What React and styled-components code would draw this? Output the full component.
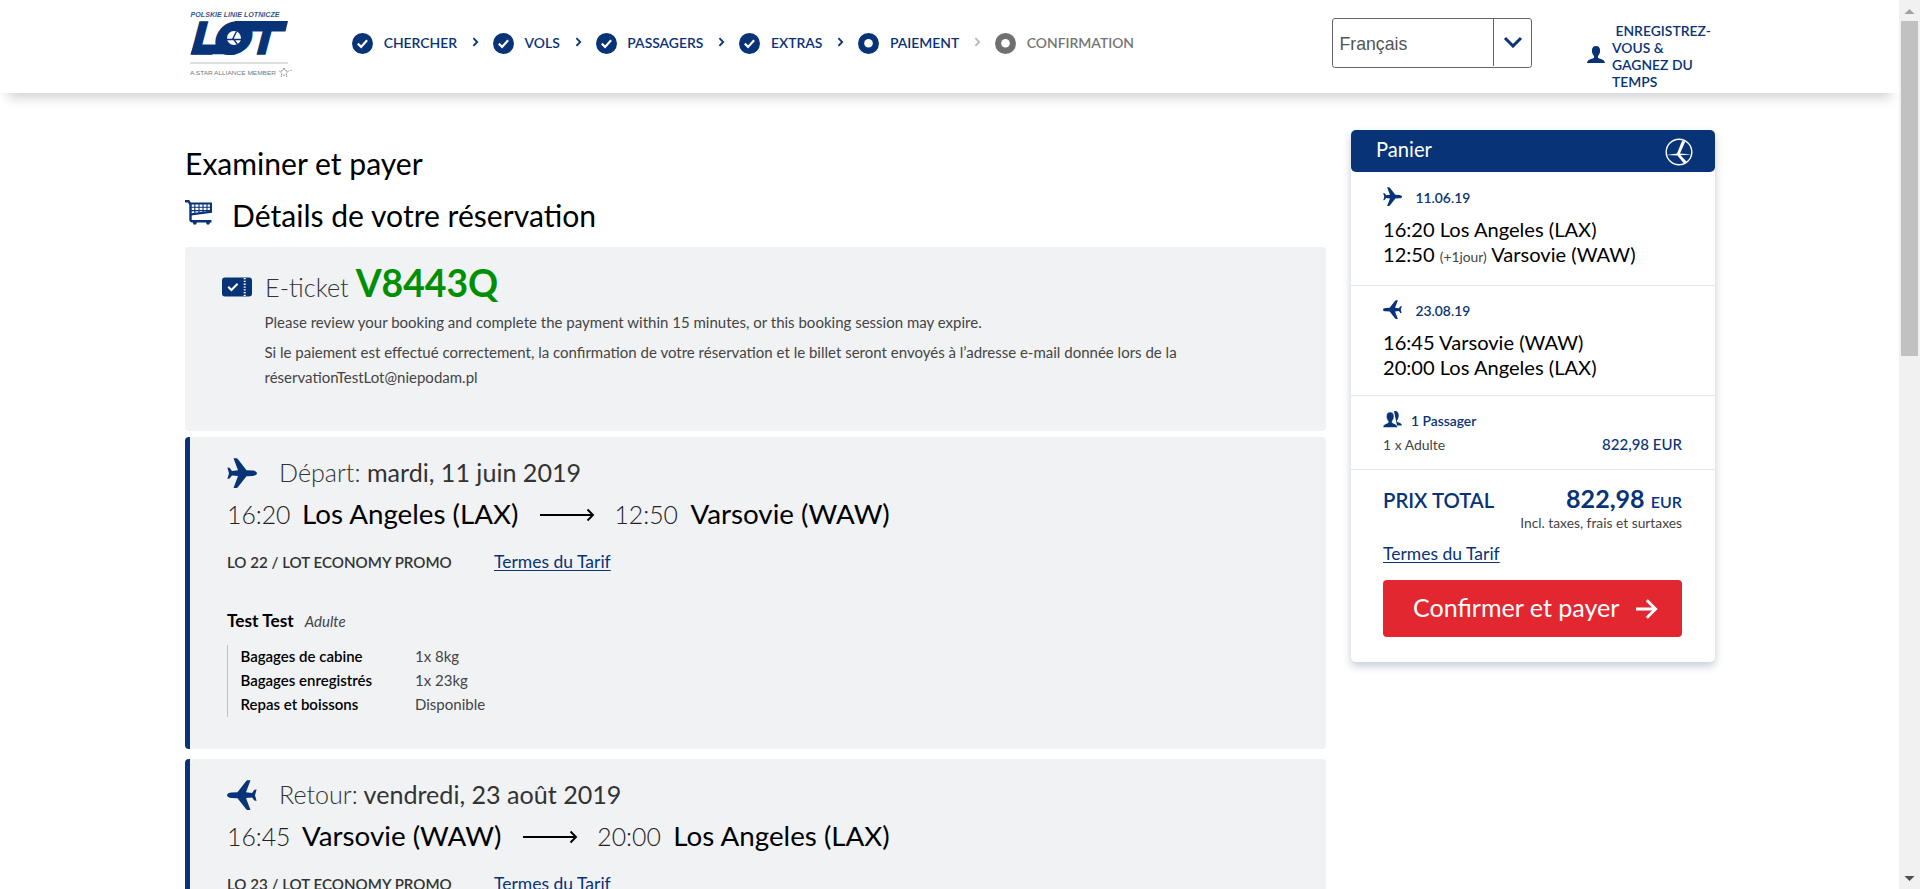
import React from 'react';
import styled, { createGlobalStyle, css } from 'styled-components';

const navy = '#083377';

const GlobalStyle = createGlobalStyle`
  *, *::before, *::after { box-sizing: border-box; }
  html, body { margin: 0; height: 100%; overflow: hidden; background: #fff; }
  body { font-family: Lato, "Liberation Sans", sans-serif; color: #000; }
  h1, h2, h3, p { margin: 0; font-weight: 400; }
  svg { display: block; flex: none; }
`;

const Screen = styled.div`
  display: flex;
  height: 889px;
  width: 1920px;
  overflow: hidden;
`;

const Page = styled.div`
  width: 1899px;
  height: 889px;
  overflow: hidden;
`;

/* ---------- header ---------- */

const Header = styled.header`
  display: flex;
  align-items: flex-start;
  height: 93px;
  padding-left: 190px;
  background: #fff;
  box-shadow: 0 12px 12px -8px rgba(0, 0, 0, 0.2);
`;

const LogoBox = styled.a`
  display: block;
  width: 162px;
  padding-top: 8px;
`;

const Steps = styled.nav`
  display: flex;
  align-items: center;
  height: 86px;
  width: 980px;
`;

const Step = styled.span`
  display: flex;
  align-items: center;
  font-size: 13.9px;
  font-weight: 600;
  line-height: 20px;
  color: ${(p) => (p.$muted ? '#757575' : navy)};
  white-space: nowrap;
  svg { margin-right: 10.7px; }
`;

const StepArrow = styled.span`
  display: flex;
  padding: 0 13.8px 2px 15.1px;
  color: ${(p) => (p.$muted ? '#b3b9c6' : navy)};
`;

const LanguageSelect = styled.div`
  display: flex;
  width: 200px;
  height: 50px;
  margin-top: 18px;
  border: 1px solid #666;
  border-radius: 3px;
  font: 17.7px/50px "Liberation Sans", Arial, sans-serif;
  color: #555;
`;

const LanguageValue = styled.span`
  flex: 1;
  padding-left: 6.5px;
`;

const LanguageToggle = styled.span`
  display: flex;
  align-items: center;
  justify-content: center;
  width: 38px;
  height: 47px;
  padding-bottom: 1px;
  border-left: 1px solid #666;
  color: ${navy};
`;

const Register = styled.a`
  display: flex;
  align-items: center;
  gap: 7px;
  margin: 22px 0 0 55px;
  width: 130px;
  font-size: 13.9px;
  font-weight: 600;
  line-height: 17px;
  color: ${navy};
  svg { margin-top: -4px; }
`;

/* ---------- main column ---------- */

const Content = styled.main`
  display: flex;
  align-items: flex-start;
  gap: 25px;
  padding-left: 185px;
`;

const Column = styled.div`
  width: 1141px;
  padding-top: 50px;
`;

const Title = styled.h1`
  font-size: 30.1px;
  line-height: 40px;
`;

const Subtitle = styled.h2`
  display: flex;
  gap: 20px;
  margin: 12px 0;
  font-size: 30.1px;
  line-height: 40px;
  svg { margin-top: 5px; }
`;

const Card = styled.section`
  background: #f0f2f4;
  border-radius: 4px;
`;

const TicketCard = styled(Card)`
  display: flex;
  gap: 12.500px;
  height: 184px;
  padding: 13px 80px 0 37px;
  svg { margin-top: 17px; }
`;

const TicketTitle = styled.h3`
  height: 45px;
  padding-left: 0.5px;
  font-size: 25.3px;
  font-weight: 300;
  line-height: 46px;
  color: #333;
`;

const BookingCode = styled.strong`
  font-size: 37.3px;
  line-height: 46px;
  font-weight: 700;
  color: #008f00;
`;

const Note = styled.p`
  margin-top: 5px;
  font-size: 15.03px;
  line-height: 25px;
  color: #444;
`;

const FlightCard = styled(Card)`
  height: 312px;
  margin-top: ${(p) => p.$gap}px;
  padding: 20px 0 0 37px;
  border-left: 5px solid ${navy};
`;

const FlightDate = styled.div`
  display: flex;
  gap: 22px;
  height: 30px;
  font-size: 25.1px;
  line-height: 30px;
  color: #333;
  svg { margin-top: 1px; }
`;

const Thin = styled.span`
  font-weight: 300;
  font-size: 25.1px;
`;

const Route = styled.div`
  display: flex;
  align-items: baseline;
  height: 36px;
  margin-top: 9px;
  font-size: 27.75px;
  line-height: 36px;
`;

const RouteTime = styled.span`
  width: ${(p) => p.$w}px;
  font-size: 24.8px;
  font-weight: 300;
  color: #222;
`;

const RouteArrow = styled.span`
  align-self: center;
  padding: 2px 19px 0 22px;
`;

const FareRow = styled.div`
  display: flex;
  align-items: baseline;
  height: 24px;
  margin-top: 18px;
  font-size: 15.1px;
  font-weight: 600;
  line-height: 24px;
  color: #333;
`;

const FareName = styled.span`
  width: 267px;
`;

const FareLink = styled.a`
  font-size: 17.5px;
  font-weight: 400;
  line-height: 24px;
  color: ${navy};
  text-decoration: underline;
  text-decoration-thickness: 1px;
  text-underline-offset: 2px;
`;

const Traveller = styled.div`
  display: flex;
  align-items: baseline;
  gap: 11px;
  height: 24px;
  margin-top: 35px;
  font-size: 17.3px;
  line-height: 24px;
  font-weight: 700;
  em { font-size: 15px; font-weight: 400; color: #444; }
`;

const Services = styled.dl`
  display: grid;
  grid-template-columns: 174.5px 1fr;
  grid-auto-rows: 24px;
  margin: 12px 0 0;
  padding-left: 12.5px;
  border-left: 1px solid #b9c3cf;
  font-size: 15px;
  line-height: 23px;
  dt { font-weight: 600; }
  dd { margin: 0; color: #444; }
`;

/* ---------- basket ---------- */

const Basket = styled.aside`
  width: 364px;
  height: 532px;
  margin-top: 37px;
  border-radius: 5px;
  background: #fff;
  box-shadow: 0 4px 9px rgba(8, 40, 80, 0.24);
`;

const BasketHead = styled.div`
  display: flex;
  align-items: center;
  justify-content: space-between;
  height: 42px;
  padding: 0 22px 0 25px;
  border-radius: 5px;
  background: ${navy};
  color: #fff;
  font-size: 20.2px;
  line-height: 40px;
  span { margin-top: -4px; }
  svg { margin-top: 2px; }
`;

const BasketSection = styled.div`
  padding: ${(p) => p.$pad};
  ${(p) => !p.$last && css`border-bottom: 1px solid #e4e6e9;`}
`;

const BasketLabel = styled.div`
  display: flex;
  gap: ${(p) => p.$gap}px;
  font-size: 13.85px;
  font-weight: 600;
  line-height: ${(p) => p.$lh}px;
  color: ${navy};
`;

const BasketRoute = styled.div`
  margin-top: 9px;
  font-size: 20.1px;
  line-height: 25px;
  small { font-size: 13.8px; line-height: 1; color: #444; }
`;

const BasketRow = styled.div`
  display: flex;
  align-items: baseline;
  justify-content: space-between;
`;

const PassengerRow = styled(BasketRow)`
  height: 20px;
  margin-top: 3px;
  font-size: 13.95px;
  line-height: 20px;
  color: #444;
  b { font-size: 15px; font-weight: 500; color: ${navy}; }
`;

const TotalRow = styled(BasketRow)`
  height: 30px;
  line-height: 30px;
  font-size: 20.3px;
  font-weight: 600;
  color: ${navy};
`;

const TotalPrice = styled.span`
  font-size: 25.1px;
  font-weight: 700;
  small { font-size: 16px; line-height: 1; font-weight: 600; }
`;

const TaxNote = styled.div`
  font-size: 13.8px;
  line-height: 20px;
  text-align: right;
  color: #444;
`;

const BasketTerms = styled.div`
  height: 24px;
  margin-top: 9px;
  line-height: 24px;
`;

const PayButton = styled.button`
  display: flex;
  align-items: center;
  gap: 17px;
  width: 299px;
  height: 57px;
  margin: 14px 0 0;
  padding: 0 0 4px 30px;
  border: 0;
  border-radius: 4px;
  background: #e32731;
  color: #fff;
  font: 25.05px/30px Lato, sans-serif;
  svg { margin-top: 4px; }
`;

/* ---------- scrollbar ---------- */

const ScrollTrack = styled.div`
  display: flex;
  flex-direction: column;
  align-items: center;
  justify-content: space-between;
  width: 21px;
  background: #f1f1f1;
`;

const ScrollThumb = styled.div`
  width: 17px;
  height: 335px;
  margin-bottom: auto;
  background: #c1c1c1;
`;

/* ---------- drawings ---------- */

const Logo = () => (
  <svg width="104" height="72" viewBox="0 0 104 72">
    <g fill={navy}>
      <text x="0.5" y="9" fontFamily="Liberation Sans" fontSize="6.6" fontWeight="700" fontStyle="italic" textLength="89" lengthAdjust="spacingAndGlyphs" fillOpacity=".85">POLSKIE LINIE LOTNICZE</text>
      <text transform="translate(0 45.500) skewX(-7)" fontFamily="Lato" fontSize="44" fontWeight="900" fontStyle="italic" textLength="87" lengthAdjust="spacingAndGlyphs" stroke={navy} strokeWidth="1.5">LOT</text>
      <text x="0" y="67" fontFamily="Liberation Sans" fontSize="6.1" fill="#777" textLength="86" lengthAdjust="spacingAndGlyphs">A STAR ALLIANCE MEMBER</text>
    </g>
    <path d="M45 13H98L95.500 23.500H50ZM4 36.500H40L45 46.300H0.500Z" fill={navy} />
    <ellipse cx="44" cy="30" rx="13" ry="12" fill={navy} />
    <circle cx="44" cy="30" r="7" fill="#fff" />
    <path d="M46.500 23.500L43 30.500L47.500 36.500M37 31.500H51" fill="none" stroke={navy} strokeWidth="1.4" />
    <path d="M0 55H98" stroke="#d4d4d4" strokeWidth="1.4" />
    <path d="M94 60l1.4 2.8 3.1.3-2.3 2.2.7 3.2-2.9-1.6-2.9 1.6.7-3.2-2.3-2.2 3.1-.3Z" fill="none" stroke="#888" strokeDasharray="2 1" />
    <path d="M99.500 62.500H102" stroke="#aaa" strokeWidth=".7" />
  </svg>
);

const StepIcon = ({ done, muted }) => (
  <svg width="21" height="21" viewBox="0 0 21 21">
    <circle cx="10.5" cy="10.5" r="10.5" fill={muted ? '#707070' : navy} />
    {done ? (
      <path d="M5.8 10.6l3.3 3.3 6-6.6" fill="none" stroke="#fff" strokeWidth="2.2" />
    ) : (
      <circle cx="10.5" cy="10.3" r="4.3" fill="#fff" />
    )}
  </svg>
);

const SmallChevron = () => (
  <svg width="7" height="10" viewBox="0 0 7 10">
    <path d="M1.4 1.2L5.2 5 1.4 8.8" fill="none" stroke="currentColor" strokeWidth="1.8" />
  </svg>
);

const DownChevron = () => (
  <svg width="20" height="12" viewBox="0 0 20 12">
    <path d="M2 2l8 8 8-8" fill="none" stroke="currentColor" strokeWidth="3" />
  </svg>
);

const PersonIcon = () => (
  <svg width="18" height="17" viewBox="0 0 18 17">
    <path d="M9 0c2.700 0 4.200 2 4.100 4.700-.1 2.300-.9 4.100-2.100 5.300v1.700c.3.900 6.800 1.200 7 5.300H0c.2-4.100 6.700-4.400 7-5.300V10C5.800 8.800 5 7 4.900 4.700 4.800 2 6.300 0 9 0z" fill={navy} />
  </svg>
);

const PeopleIcon = () => (
  <svg width="19" height="17" viewBox="0 0 19 17">
    <path d="M11 .2c3-.6 4.800 1.300 4.700 4.200 0 2-.7 3.700-1.700 4.900v1.300c.6 1 4.600 1.300 5 3.800h-5z" fill={navy} />
    <path d="M7.200 1c2.500 0 3.900 1.900 3.800 4.500-.1 2-.8 3.500-1.900 4.600v1.300c.3.900 5.300 1.400 5.500 5.100H0c.2-3.700 5-4.200 5.300-5.100v-1.300C4.200 9 3.500 7.500 3.400 5.500 3.300 2.900 4.700 1 7.200 1z" fill={navy} stroke="#fff" strokeWidth=".5" />
  </svg>
);

const Plane = ({ size, back }) => (
  <svg width={size} height={size} viewBox="0 0 30 30">
    <path
      transform={back ? 'translate(30 0) scale(-1 1)' : undefined}
      d="M30 15.200C29.900 13.800 28 12.600 25.500 12.500L19.500 12.200L10.800 1Q10.200.2 9.500.2H6.500L11 12.300L5 12.900L2.600 9.800L.4 9.500L2 15.200L.4 20.900L2.600 20.600L5 17.500L11 18.100L6.500 30H9.500Q10.200 30 10.800 29.300L19.500 18.200L25.500 17.900C28 17.800 29.900 16.600 30 15.200Z"
      fill={navy}
    />
  </svg>
);

const CartIcon = () => (
  <svg width="27" height="25" viewBox="0 0 27 25">
    <g fill="none" stroke={navy}>
      <path d="M0 1.200H3.500L5.500 4.500V19.500Q5.500 21.300 7.500 21.300H26.500" strokeWidth="2.400" />
      <path d="M4.500 3.500H26V11.800L6 14.300" strokeWidth="2.200" />
      <path d="M6 7.200H26M6 10.600H26M9.800 4V13M14 4V13M18 4V12.500M22 4V12.500" strokeWidth="1.100" />
    </g>
    <circle cx="9.800" cy="22.800" r="1.900" fill={navy} />
    <circle cx="23" cy="22.800" r="1.900" fill={navy} />
  </svg>
);

const TicketIcon = () => (
  <svg width="30" height="20" viewBox="0 0 30 20">
    <rect y=".5" width="30" height="19" rx="3" fill={navy} />
    <path d="M6.200 9.800l3.200 3.200 6.200-6.200" fill="none" stroke="#fff" strokeWidth="2" />
    <path d="M22.700 1v18" stroke="#fff" strokeWidth="2" strokeDasharray="1.300 1.500" />
  </svg>
);

const LongArrow = () => (
  <svg width="55" height="14" viewBox="0 0 55 14">
    <path d="M0 7H53M47.500 1.500L53 7L47.500 12.500" fill="none" stroke="#000" strokeWidth="1.900" />
  </svg>
);

const CraneIcon = () => (
  <svg width="28" height="28" viewBox="0 0 28 28">
    <circle cx="14" cy="14" r="12.800" fill="none" stroke="#fff" strokeWidth="1.400" />
    <path d="M1.500 17L12 15.400L17 3L20.300 3.500L15 15.400L26.500 16.600L15.500 17.300L21.500 23.500L19.500 26.300L12.500 17.500Z" fill="#fff" />
  </svg>
);

const RightArrow = () => (
  <svg width="22" height="20" viewBox="0 0 22 20">
    <path d="M0 10H19.500M10.800 1.200L19.600 10L10.800 18.800" fill="none" stroke="#fff" strokeWidth="2.900" />
  </svg>
);

const ScrollArrow = ({ down }) => (
  <svg width="21" height="21" viewBox="0 0 21 21">
    <path d={down ? 'M5.500 8h10l-5 5z' : 'M5.500 14h10l-5-5z'} fill={down ? '#505050' : '#a3a3a3'} />
  </svg>
);

/* ---------- data ---------- */

const steps = [
  { label: 'CHERCHER', done: true },
  { label: 'VOLS', done: true },
  { label: 'PASSAGERS', done: true },
  { label: 'EXTRAS', done: true },
  { label: 'PAIEMENT' },
  { label: 'CONFIRMATION', muted: true },
];

const flights = [
  { kind: 'Départ:', date: 'mardi, 11 juin 2019', from: ['16:20', 'Los Angeles (LAX)'], to: ['12:50', 'Varsovie (WAW)'], fare: 'LO 22 / LOT ECONOMY PROMO', gap: 6 },
  { kind: 'Retour:', date: 'vendredi, 23 août 2019', from: ['16:45', 'Varsovie (WAW)'], to: ['20:00', 'Los Angeles (LAX)'], fare: 'LO 23 / LOT ECONOMY PROMO', gap: 10, back: true },
];

const services = [
  ['Bagages de cabine', '1x 8kg'],
  ['Bagages enregistrés', '1x 23kg'],
  ['Repas et boissons', 'Disponible'],
];

const Flight = ({ f }) => (
  <FlightCard $gap={f.gap}>
    <FlightDate>
      <Plane size={30} back={f.back} />
      <span><Thin>{f.kind}</Thin> {f.date}</span>
    </FlightDate>
    <Route>
      <RouteTime $w={75}>{f.from[0]}</RouteTime>
      <span>{f.from[1]}</span>
      <RouteArrow><LongArrow /></RouteArrow>
      <RouteTime $w={76}>{f.to[0]}</RouteTime>
      <span>{f.to[1]}</span>
    </Route>
    <FareRow>
      <FareName>{f.fare}</FareName>
      <FareLink>Termes du Tarif</FareLink>
    </FareRow>
    <Traveller>Test Test <em>Adulte</em></Traveller>
    <Services>
      {services.map(([k, v]) => (
        <React.Fragment key={k}>
          <dt>{k}</dt>
          <dd>{v}</dd>
        </React.Fragment>
      ))}
    </Services>
  </FlightCard>
);

export default function App() {
  return (
    <Screen>
      <GlobalStyle />
      <Page>
        <Header>
          <LogoBox><Logo /></LogoBox>
          <Steps>
            {steps.map((s, i) => (
              <React.Fragment key={s.label}>
                {i > 0 && <StepArrow $muted={s.muted}><SmallChevron /></StepArrow>}
                <Step $muted={s.muted}><StepIcon done={s.done} muted={s.muted} />{s.label}</Step>
              </React.Fragment>
            ))}
          </Steps>
          <LanguageSelect>
            <LanguageValue>Français</LanguageValue>
            <LanguageToggle><DownChevron /></LanguageToggle>
          </LanguageSelect>
          <Register>
            <PersonIcon />
            <span>&nbsp;ENREGISTREZ-<br />VOUS &amp;<br />GAGNEZ DU<br />TEMPS</span>
          </Register>
        </Header>
        <Content>
          <Column>
            <Title>Examiner et payer</Title>
            <Subtitle><CartIcon />Détails de votre réservation</Subtitle>
            <TicketCard>
              <TicketIcon />
              <div>
                <TicketTitle>E-ticket <BookingCode>V8443Q</BookingCode></TicketTitle>
                <Note>Please review your booking and complete the payment within 15 minutes, or this booking session may expire.</Note>
                <Note>Si le paiement est effectué correctement, la confirmation de votre réservation et le billet seront envoyés à l’adresse e-mail donnée lors de la<br />réservationTestLot@niepodam.pl</Note>
              </div>
            </TicketCard>
            {flights.map((f) => <Flight key={f.kind} f={f} />)}
          </Column>
          <Basket>
            <BasketHead><span>Panier</span><CraneIcon /></BasketHead>
            <BasketSection $pad="15px 32px 18px">
              <BasketLabel $gap={13.5} $lh={21}><Plane size={19} />11.06.19</BasketLabel>
              <BasketRoute>16:20 Los Angeles (LAX)<br />12:50 <small>(+1jour)</small> Varsovie (WAW)</BasketRoute>
            </BasketSection>
            <BasketSection $pad="14px 32px 15px">
              <BasketLabel $gap={13.5} $lh={21}><Plane size={19} back />23.08.19</BasketLabel>
              <BasketRoute>16:45 Varsovie (WAW)<br />20:00 Los Angeles (LAX)</BasketRoute>
            </BasketSection>
            <BasketSection $pad="15px 33px 15px 32px">
              <BasketLabel $gap={9} $lh={20}><PeopleIcon />1 Passager</BasketLabel>
              <PassengerRow><span>1 x Adulte</span><b>822,98 EUR</b></PassengerRow>
            </BasketSection>
            <BasketSection $pad="13px 33px 25px 32px" $last>
              <TotalRow><span>PRIX TOTAL</span><TotalPrice>822,98 <small>EUR</small></TotalPrice></TotalRow>
              <TaxNote>Incl. taxes, frais et surtaxes</TaxNote>
              <BasketTerms><FareLink>Termes du Tarif</FareLink></BasketTerms>
              <PayButton>Confirmer et payer<RightArrow /></PayButton>
            </BasketSection>
          </Basket>
        </Content>
      </Page>
      <ScrollTrack>
        <ScrollArrow />
        <ScrollThumb />
        <ScrollArrow down />
      </ScrollTrack>
    </Screen>
  );
}
